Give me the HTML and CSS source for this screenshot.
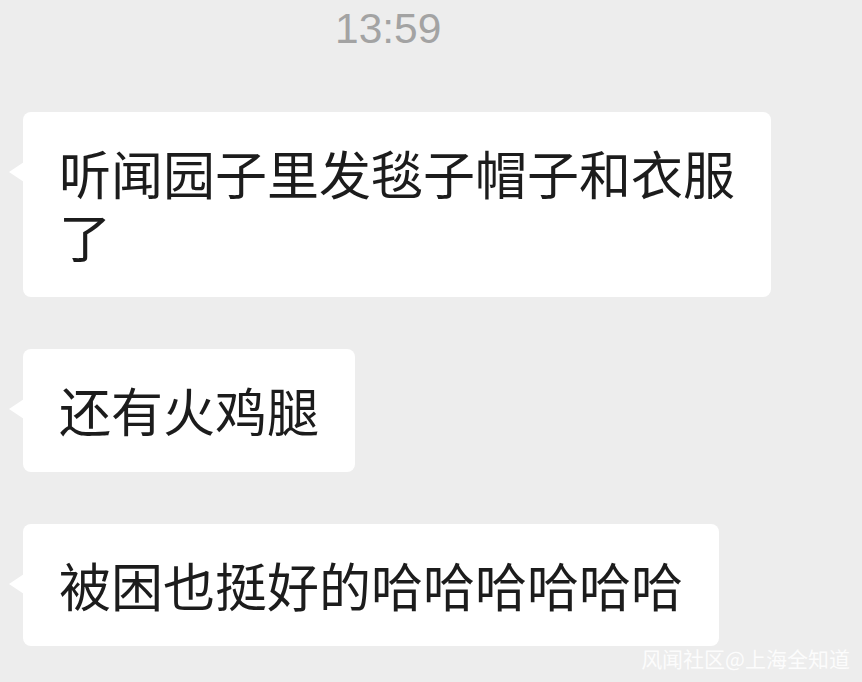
FILE: index.html
```html
<!DOCTYPE html>
<html lang="zh">
<head>
<meta charset="utf-8">
<link rel="stylesheet" href="styles.css">
</head>
<body>
<div class="chat">
  <div class="time-row"><span class="time">13:59</span></div>
  <div class="msg"><div class="bubble">听闻园子里发毯子帽子和衣服了</div></div>
  <div class="msg"><div class="bubble">还有火鸡腿</div></div>
  <div class="msg"><div class="bubble">被困也挺好的哈哈哈哈哈哈</div></div>
</div>
<div class="watermark">风闻社区@上海全知道</div>
</body>
</html>
```
FILE: styles.css
```css
html, body {
  margin: 0;
  padding: 0;
  background: #ededed;
  width: 862px;
  height: 682px;
  overflow: hidden;
}
body {
  position: relative;
  font-family: "Noto Sans CJK SC", "Noto Sans", sans-serif;
}
.chat {
  display: flex;
  flex-direction: column;
  gap: 52px;
}
.time-row {
  display: flex;
  padding-left: 335px;
  padding-top: 5px;
  height: 55px;
}
.time {
  font-family: "Liberation Sans", Arial, sans-serif;
  font-size: 42.5px;
  line-height: 48px;
  color: #a3a3a3;
}
.msg {
  display: flex;
  padding-left: 23px;
}
.bubble {
  position: relative;
  background: #ffffff;
  border-radius: 8px;
  padding: 30px 36px;
  font-size: 52px;
  line-height: 62.5px;
  color: #1c1c1c;
  max-width: 676px;
}
.bubble::before {
  content: "";
  position: absolute;
  left: -14px;
  top: 50px;
  width: 0;
  height: 0;
  border-top: 10px solid transparent;
  border-bottom: 10px solid transparent;
  border-right: 15px solid #ffffff;
}
.watermark {
  position: absolute;
  right: 12px;
  bottom: 12px;
  font-size: 21px;
  line-height: 24px;
  color: rgba(255,255,255,0.85);
}
```
